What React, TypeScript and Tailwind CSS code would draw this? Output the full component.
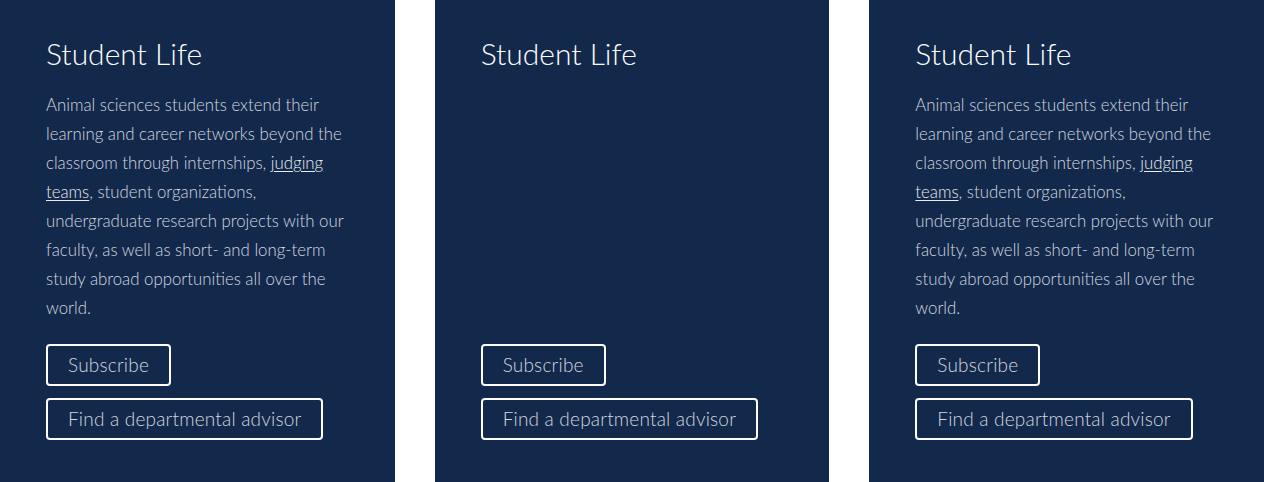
const cards = [
  { withText: true },
  { withText: false },
  { withText: true },
];

function Card({ withText }: { withText: boolean }) {
  return (
    <div className="flex flex-col bg-[#13294b] pl-[46px] pr-10 pt-[33px] pb-[42px] h-[482px]">
      <h2 className="text-[30px] leading-[40px] font-light text-white">Student Life</h2>
      {withText && (
        <p className="mt-[17px] text-[16.8px] leading-[29px] font-light text-[#d2d7e0]">
          Animal sciences students extend their learning and career networks beyond the
          classroom through internships,{' '}
          <a href="#" className="underline underline-offset-2 text-[#e8ebf0]">judging teams</a>,
          student organizations, undergraduate research projects with our faculty, as well as
          short- and long-term study abroad opportunities all over the world.
        </p>
      )}
      <div className="mt-auto flex flex-col items-start gap-3">
        <a href="#" className="border-2 border-white rounded-[4px] px-5 h-[42px] flex items-center text-[19px] tracking-[0.2px] font-light text-[#d2d7e0]">
          Subscribe
        </a>
        <a href="#" className="border-2 border-white rounded-[4px] px-5 h-[42px] flex items-center text-[19px] tracking-[0.2px] font-light text-[#d2d7e0]">
          Find a departmental advisor
        </a>
      </div>
    </div>
  );
}

export default function App() {
  return (
    <div className="bg-white grid grid-cols-3 gap-10 font-['Lato',sans-serif]">
      {cards.map((c, i) => (
        <Card key={i} withText={c.withText} />
      ))}
    </div>
  );
}
